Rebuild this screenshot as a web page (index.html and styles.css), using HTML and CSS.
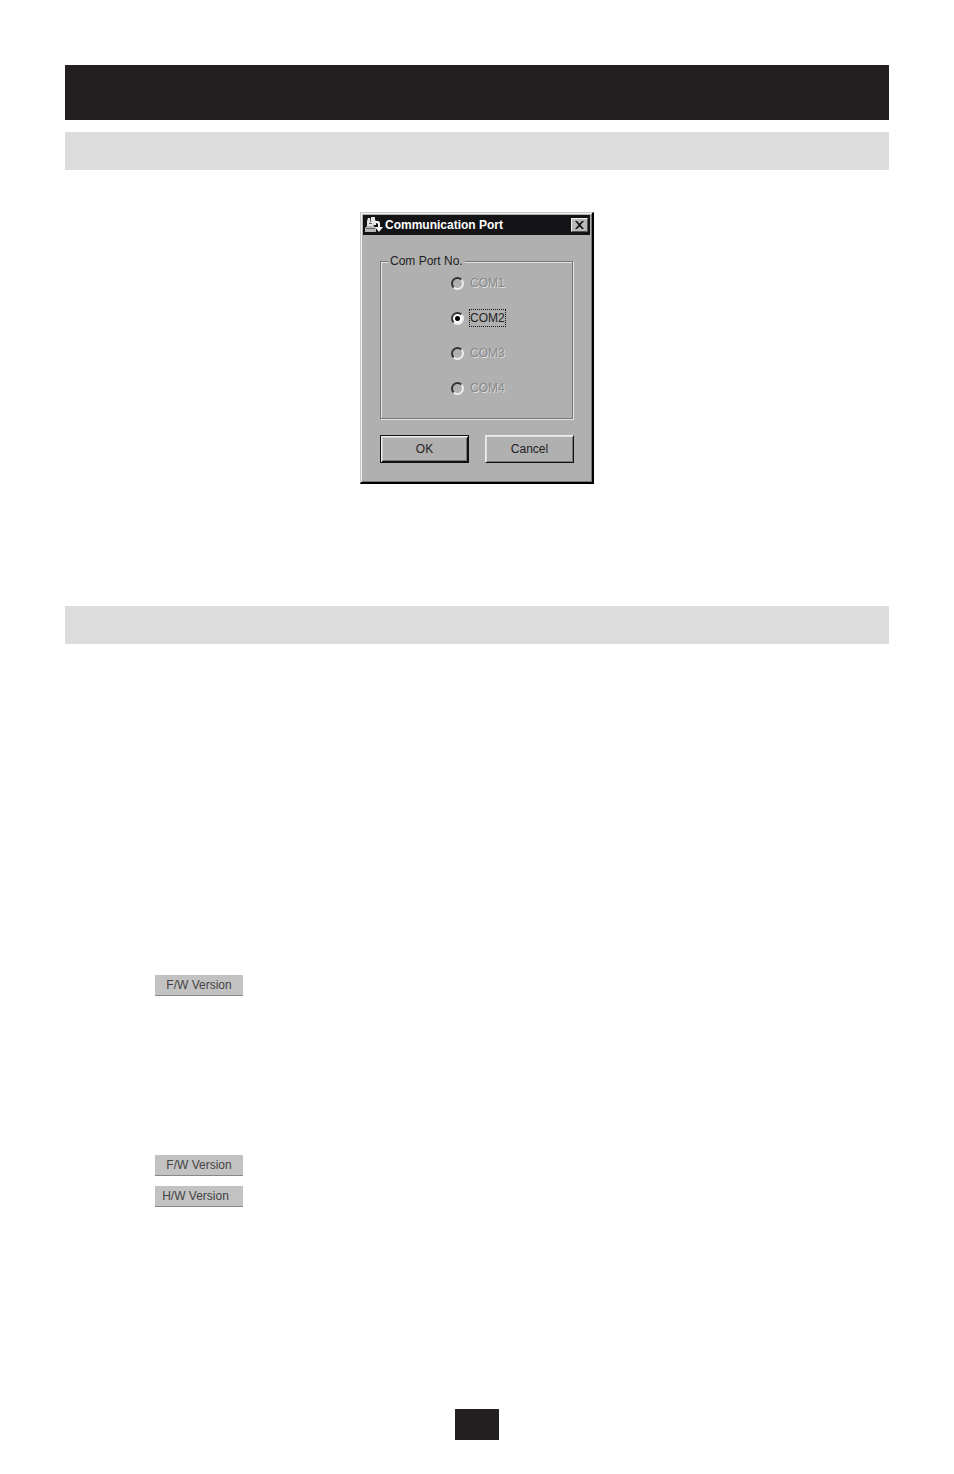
FILE: index.html
```html
<!DOCTYPE html>
<html lang="en">
<head>
<meta charset="utf-8">
<title>Communication Port</title>
<link rel="stylesheet" href="styles.css">
</head>
<body>
<main class="page">
  <div class="banner"></div>
  <div class="section-bar"></div>
  <form class="dialog" aria-labelledby="dialog-title">
    <header class="titlebar">
      <svg class="app-icon" viewBox="0 0 18 16" aria-hidden="true">
        <path d="M2 4l1-3h2v2h1V0h4v3l1 1v4H9l-1 1H2z" fill="#e4e4e4"/>
        <path d="M5 2h1v3H5zM4 6h3v1H4z" fill="#555"/>
        <path d="M2 9h7l2 2v4H0v-4z" fill="#b8b8b8"/>
        <path d="M1 11h9v1H1z" fill="#666"/>
        <path d="M10 4h3q2 0 2 3v3h3l-4 5-4-5h3V7q0-1-3-1z" fill="#f4f4f4"/>
      </svg>
      <h1 class="title" id="dialog-title">Communication Port</h1>
      <button class="close" type="button" aria-label="Close">
        <svg class="close-icon" viewBox="0 0 9 8" aria-hidden="true"><path d="M0 0h2l2.500 2.500L7 0h2L5.500 4 9 8H7L4.500 5.500 2 8H0l3.500-4z" fill="#111"/></svg>
      </button>
    </header>
    <div class="dialog-body">
      <fieldset class="group">
        <legend class="legend">Com Port No.</legend>
        <div class="options">
          <label class="option"><input class="radio" type="radio" name="port" disabled><span class="option-text">COM1</span></label>
          <label class="option"><input class="radio" type="radio" name="port" checked><span class="option-text">COM2</span></label>
          <label class="option"><input class="radio" type="radio" name="port" disabled><span class="option-text">COM3</span></label>
          <label class="option"><input class="radio" type="radio" name="port" disabled><span class="option-text">COM4</span></label>
        </div>
      </fieldset>
      <div class="actions">
        <button class="button button-default" type="button">OK</button>
        <button class="button" type="button">Cancel</button>
      </div>
    </div>
  </form>
  <div class="section-bar section-bar-second"></div>
  <div class="versions">
    <button class="version version-first" type="button">F/W Version</button>
    <button class="version" type="button">F/W Version</button>
    <button class="version version-hw" type="button">H/W Version</button>
  </div>
  <div class="page-number"></div>
</main>
</body>
</html>
```
FILE: styles.css
```css
* { box-sizing: border-box; }

body {
  margin: 0;
  background: #fff;
  color: #222;
  font-family: "Liberation Sans", Arial, sans-serif;
  font-size: 12px;
}

.page {
  display: flex;
  flex-direction: column;
  padding: 65px 65px 34px;
}

.banner {
  height: 55px;
  background: #231f20;
}

.section-bar {
  height: 38px;
  margin-top: 12px;
  background: #dcdcdc;
}

.section-bar-second { margin-top: 122px; }

.dialog {
  align-self: center;
  width: 234px;
  margin-top: 42px;
  padding: 1px;
  background: #b0b0b0;
  border: 1px solid #c8c8c8;
  border-right: 2px solid #000;
  border-bottom: 2px solid #000;
  box-shadow: inset 1px 1px #f0f0f0, inset -1px -1px #777;
}

.titlebar {
  display: flex;
  align-items: center;
  height: 20px;
  margin: 1px;
  padding: 0 2px;
  background: #141416;
}

.app-icon {
  width: 18px;
  height: 16px;
}

.title {
  flex: 1;
  margin: 0 0 0 2px;
  color: #fff;
  font-size: 12px;
  font-weight: bold;
  line-height: 16px;
  white-space: nowrap;
}

.close {
  display: flex;
  align-items: center;
  justify-content: center;
  width: 17px;
  height: 14px;
  padding: 0;
  background: #b8b8b8;
  border: 1px solid;
  border-color: #f0f0f0 #555 #555 #f0f0f0;
}

.close-icon {
  width: 9px;
  height: 8px;
}

.dialog-body { padding: 17px 17px 18px 18px; }

.group {
  height: 166px;
  min-width: 0;
  margin: 0 1px 0 0;
  padding: 0 0 0 70px;
  border: 1px solid #777;
  box-shadow: inset 1px 1px #e4e4e4, 1px 1px #e4e4e4;
}

.legend {
  margin-left: -63px;
  padding: 0 2px;
  background: #b0b0b0;
  line-height: 16px;
}

.options {
  display: flex;
  flex-direction: column;
  align-items: flex-start;
  gap: 17px;
  padding-top: 5px;
}

.option {
  display: flex;
  align-items: center;
  gap: 5px;
  height: 18px;
}

.radio {
  appearance: none;
  width: 13px;
  height: 13px;
  margin: 0;
  border: 2px solid;
  border-color: #333 #eee #eee #333;
  border-radius: 50%;
  background: #b0b0b0;
}

.radio:checked {
  background: radial-gradient(circle, #000 2px, #fff 3px);
}

.option-text {
  border: 1px solid transparent;
  line-height: 16px;
}

.radio:checked + .option-text { border: 1px dotted #111; }

.radio:disabled + .option-text {
  color: #888;
  text-shadow: 1px 1px #ddd;
}

.actions {
  display: flex;
  gap: 16px;
  margin-top: 16px;
}

.button {
  flex: 1;
  height: 28px;
  padding: 0;
  color: #222;
  background: #b0b0b0;
  border: 1px solid;
  border-color: #eee #111 #111 #eee;
  box-shadow: inset 1px 1px #ddd, inset -1px -1px #777;
  font: inherit;
}

.button-default {
  border: 1px solid #111;
  box-shadow: inset 1px 1px #eee, inset -1px -1px #111, inset 2px 2px #ccc, inset -2px -2px #777;
}

.versions {
  display: flex;
  flex-direction: column;
  align-items: flex-start;
  gap: 10px;
  margin-top: 331px;
  padding-left: 90px;
}

.version {
  width: 88px;
  height: 21px;
  padding: 0;
  color: #444;
  background: #c2c2c2;
  border: 0;
  border-bottom: 1px solid #888;
  font: inherit;
}

.version-first { margin-bottom: 149px; }

.version-hw { padding-right: 7px; }

.page-number {
  align-self: center;
  width: 44px;
  height: 31px;
  margin-top: 202px;
  background: #231f20;
}
```
